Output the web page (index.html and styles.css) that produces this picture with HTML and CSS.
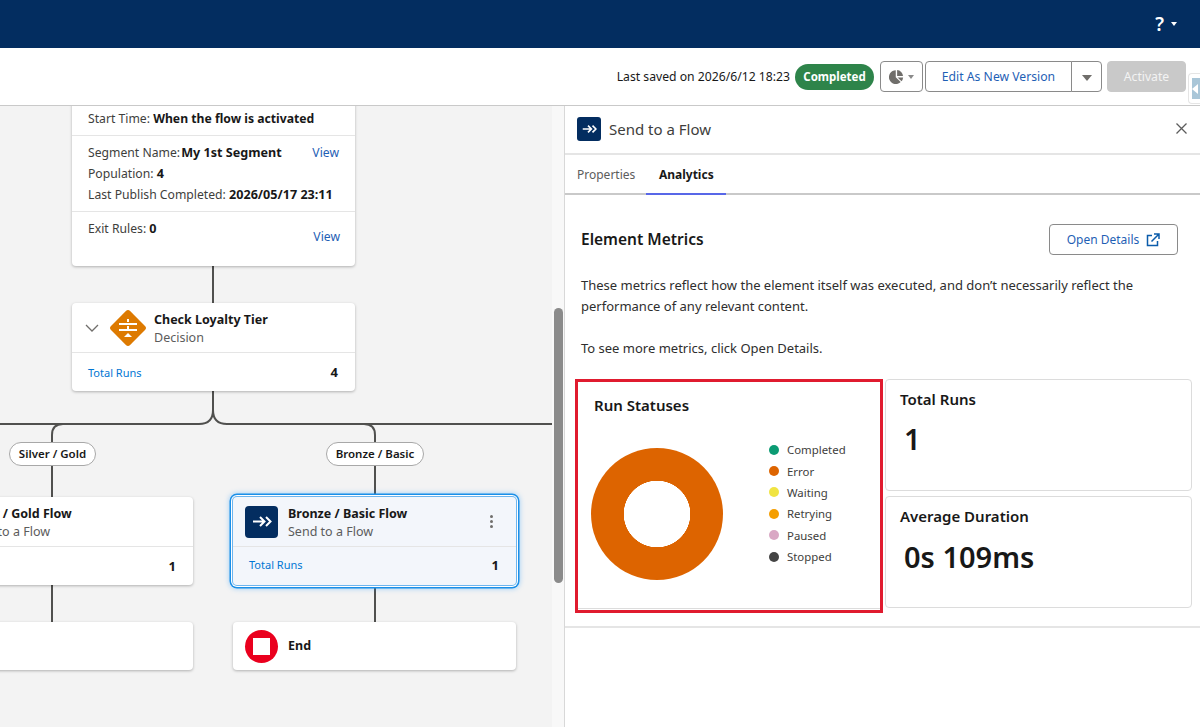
FILE: index.html
```html
<!DOCTYPE html>
<html lang="en">

<head>
  <meta charset="UTF-8" />
  <meta name="viewport" content="width=device-width, initial-scale=1.0" />
  <title>Flow Builder</title>
  <link rel="stylesheet" href="styles.css">
</head>

<body>
  <div class="topbar">
    <span class="help">?</span>
    <span class="caret caret-white"></span>
  </div>

  <div class="toolbar">
    <span class="saved">Last saved on 2026/6/12 18:23</span>
    <span class="status">Completed</span>
    <button class="btn btn-chart">
      <svg width="15" height="15" viewBox="0 0 14 14">
        <path d="M6.3 1.2v6.4l4.6 4.5A6.4 6.4 0 1 1 6.3 1.200z" fill="#706e6b" />
        <path d="M7.600 1a6 6 0 0 1 5.500 5.600H7.600z" fill="#706e6b" />
        <path d="M8 8h5.200a6 6 0 0 1-1.500 3.500z" fill="#706e6b" />
      </svg>
      <span class="caret caret-grey"></span>
    </button>
    <div class="btn-group">
      <button class="btn btn-edit">Edit As New Version</button>
      <button class="btn btn-more"><span class="caret caret-big"></span></button>
    </div>
    <button class="btn btn-activate">Activate</button>
    <div class="handle"><span class="handle-arrow"></span></div>
  </div>

  <div class="main">
    <div class="canvas">
      <div class="scroll-track"></div>
      <svg class="wires" width="552" height="621" viewBox="0 0 552 621">
        <g fill="none" stroke="#50504e" stroke-width="2">
          <path d="M213 160v37" />
          <path d="M213 285v19q0 14-14 14H0" />
          <path d="M213 304q0 14 14 14h325" />
          <path d="M52 336v-7q0-11 11-11" />
          <path d="M375 336v-7q0-11-11-11" />
          <path d="M52 360v31" />
          <path d="M375 360v31" />
          <path d="M52 479v37" />
          <path d="M375 479v37" />
        </g>
      </svg>

      <div class="node node-start">
        <div class="start-row start-time">Start Time: <b>When the flow is activated</b></div>
        <div class="start-row start-segment">
          <div class="seg-line"><span>Segment Name: <b>My 1st Segment</b></span><a href="#">View</a></div>
          <div>Population: <b>4</b></div>
          <div>Last Publish Completed: <b>2026/05/17 23:11</b></div>
        </div>
        <div class="start-row start-exit">
          <span>Exit Rules: <b>0</b></span>
          <a href="#">View</a>
        </div>
      </div>

      <div class="node node-decision">
        <div class="node-head">
          <svg class="chevron" width="14" height="8" viewBox="0 0 14 8">
            <path d="M1 1l6 6 6-6" fill="none" stroke="#706e6b" stroke-width="1.300" />
          </svg>
          <svg width="38" height="38" viewBox="0 0 38 38">
            <rect x="5.500" y="5.500" width="27" height="27" rx="3" fill="#dd7a01" transform="rotate(45 19 19)" />
            <path d="M18 10h2v3h-2zM18 17h2v4h-2zM10 14h18v2H10zM10 20h18v2H10zM19 24l4 4h-8z" fill="#fff" />
          </svg>
          <div class="node-title">
            <b>Check Loyalty Tier</b>
            <span>Decision</span>
          </div>
        </div>
        <div class="node-foot"><a href="#">Total Runs</a><b>4</b></div>
      </div>

      <span class="pill pill-silver">Silver / Gold</span>
      <span class="pill pill-bronze">Bronze / Basic</span>

      <div class="node node-silver">
        <div class="node-head">
          <div class="node-title">
            <b>Silver / Gold Flow</b>
            <span>Send to a Flow</span>
          </div>
        </div>
        <div class="node-foot"><a href="#">Total Runs</a><b>1</b></div>
      </div>

      <div class="node node-bronze">
        <div class="node-head">
          <div class="flow-icon">
            <svg width="20" height="13" viewBox="0 0 20 13">
              <path d="M1 6.500h11M8 2l4.500 4.500L8 11M14 2l4.500 4.500L14 11" fill="none" stroke="#fff" stroke-width="2" />
            </svg>
          </div>
          <div class="node-title">
            <b>Bronze / Basic Flow</b>
            <span>Send to a Flow</span>
          </div>
          <div class="dots"><i></i><i></i><i></i></div>
        </div>
        <div class="node-foot"><a href="#">Total Runs</a><b>1</b></div>
      </div>

      <div class="node node-blank"></div>

      <div class="node node-end">
        <div class="end-icon"><i></i></div>
        <b>End</b>
      </div>

      <div class="scroll-thumb"></div>
    </div>

    <div class="panel">
      <div class="panel-head">
        <div class="panel-icon">
          <svg width="15" height="10" viewBox="0 0 20 13">
            <path d="M1 6.500h11M8 2l4.500 4.500L8 11M14 2l4.500 4.500L14 11" fill="none" stroke="#fff" stroke-width="2.200" />
          </svg>
        </div>
        <span class="panel-title">Send to a Flow</span>
        <svg class="close" width="11" height="11" viewBox="0 0 11 11">
          <path d="M.5.5l10 10M10.500.5l-10 10" stroke="#5c5c5c" stroke-width="1.300" />
        </svg>
      </div>

      <div class="tabs">
        <span class="tab">Properties</span>
        <span class="tab tab-active">Analytics</span>
      </div>

      <div class="panel-body">
        <div class="metrics-head">
          <h2>Element Metrics</h2>
          <button class="btn btn-open">
            Open Details
            <svg width="14" height="14" viewBox="0 0 14 14">
              <path d="M6 2.500H1.500v10h10V8" fill="none" stroke="#0b5cab" stroke-width="1.500" />
              <path d="M5.500 8.500L12.500 1.500M8 1h5v5" fill="none" stroke="#0b5cab" stroke-width="1.500" />
            </svg>
          </button>
        </div>
        <p>These metrics reflect how the element itself was executed, and don’t necessarily reflect the performance of any relevant content.</p>
        <p class="more">To see more metrics, click Open Details.</p>
      </div>

      <div class="cards">
        <div class="card card-status">
          <h3>Run Statuses</h3>
          <div class="chart-row">
            <div class="donut"></div>
            <ul class="legend">
              <li><i class="dot-completed"></i>Completed</li>
              <li><i class="dot-error"></i>Error</li>
              <li><i class="dot-waiting"></i>Waiting</li>
              <li><i class="dot-retrying"></i>Retrying</li>
              <li><i class="dot-paused"></i>Paused</li>
              <li><i class="dot-stopped"></i>Stopped</li>
            </ul>
          </div>
        </div>
        <div class="card card-total">
          <h3>Total Runs</h3>
          <div class="big-num">1</div>
        </div>
        <div class="card card-avg">
          <h3>Average Duration</h3>
          <div class="big-num">0s 109ms</div>
        </div>
      </div>
    </div>
  </div>
</body>

</html>
```

FILE: styles.css
```css
* {
  padding: 0;
  margin: 0;
  box-sizing: border-box;
}

body {
  width: 1200px;
  height: 727px;
  overflow: hidden;
  font-family: "Noto Sans", "Open Sans", sans-serif;
  font-size: 12px;
  color: #181818;
  background: #fff;
}

a {
  color: #1f5fb5;
  text-decoration: none;
}

button {
  font-family: inherit;
}

/* top */
.topbar {
  height: 48px;
  background: #032d60;
  display: flex;
  justify-content: flex-end;
  align-items: center;
  gap: 7px;
  padding-right: 23px;
}

.help {
  color: #fff;
  font-size: 19px;
  font-weight: 600;
}

.caret {
  display: inline-block;
  width: 0;
  height: 0;
  border-left: 3px solid transparent;
  border-right: 3px solid transparent;
  border-top: 4px solid #fff;
}

.caret-grey {
  border-top-color: #8a8a8a;
}

.caret-big {
  border-left-width: 5px;
  border-right-width: 5px;
  border-top: 6px solid #706e6b;
}

.toolbar {
  position: relative;
  height: 58px;
  display: flex;
  align-items: center;
  justify-content: flex-end;
  padding: 0 14px 0 0;
  border-bottom: 1px solid #c9c9c9;
}

.saved {
  margin-right: 5px;
  font-size: 12.2px;
}

.status {
  width: 79px;
  height: 26px;
  line-height: 25px;
  margin-right: 6px;
  text-align: center;
  border-radius: 13px;
  background: #2e844a;
  color: #fff;
  font-size: 11.5px;
  font-weight: 700;
}

.btn {
  background: #fff;
  border: 1px solid #8a8a8a;
  border-radius: 4px;
  color: #1f5fb5;
  font-size: 12.2px;
}

.btn-chart {
  width: 43px;
  height: 31px;
  margin-right: 2px;
  display: flex;
  align-items: center;
  justify-content: center;
  gap: 4px;
}

.btn-group {
  display: flex;
  margin-right: 5px;
}

.btn-edit {
  width: 147px;
  height: 31px;
  border-radius: 4px 0 0 4px;
}

.btn-more {
  width: 31px;
  height: 31px;
  border-radius: 0 4px 4px 0;
  margin-left: -1px;
}

.btn-activate {
  width: 79px;
  height: 31px;
  background: #c9c9c9;
  border-color: #c9c9c9;
  color: #f3f3f3;
}

.handle {
  position: absolute;
  right: 0;
  top: 25px;
  width: 12px;
  height: 31px;
  background: #fff;
  border: 1px solid #e5e5e5;
  border-right: 0;
  border-radius: 4px 0 0 4px;
  padding: 4px 0 4px 3px;
}

.handle-arrow {
  display: block;
  height: 100%;
  background: #a9c6d8;
  padding-top: 6px;
}

.handle-arrow::before {
  content: "";
  display: block;
  width: 0;
  height: 0;
  border-top: 5px solid transparent;
  border-bottom: 5px solid transparent;
  border-right: 6px solid #fff;
}

.main {
  display: flex;
  height: 621px;
}

/* flow canvas */
.canvas {
  position: relative;
  width: 564px;
  background: #f3f3f3;
  overflow: hidden;
}

.scroll-track {
  position: absolute;
  left: 552px;
  top: 0;
  width: 12px;
  height: 100%;
  background: #f8f8f8;
}

.wires {
  position: absolute;
  left: 0;
  top: 0;
}

.node {
  position: absolute;
  width: 283px;
  background: #fff;
  border-radius: 4px;
  box-shadow: 0 1px 3px rgba(0, 0, 0, .28);
}

.node-start {
  left: 72px;
  top: -20px;
  height: 180px;
}

.start-row {
  padding: 0 16px;
  border-bottom: 1px solid #e5e5e5;
  color: #3e3e3c;
  font-size: 12.2px;
}

.start-row b {
  color: #181818;
  font-size: 12.6px;
}

.start-time {
  height: 50px;
  padding-top: 24px;
}

.start-time b {
  font-size: 12.2px;
}

.start-segment {
  height: 76px;
  padding-top: 6px;
  line-height: 21px;
}

.seg-line {
  display: flex;
  justify-content: space-between;
}

.seg-line b {
  margin-left: -2px;
}

.start-exit {
  height: 54px;
  border-bottom: 0;
  padding-top: 8px;
  display: flex;
  justify-content: space-between;
  align-items: flex-start;
  padding-right: 15px;
}

.start-exit a {
  margin-top: 8px;
}

.node-decision {
  left: 72px;
  top: 197px;
  height: 88px;
}

.node-silver {
  left: -90px;
  top: 391px;
  height: 88px;
}

.node-bronze {
  left: 233px;
  top: 391px;
  height: 88px;
  background: #f3f6fb;
  box-shadow: 0 0 0 1px #6db5ee, 0 0 0 2px #fff, 0 0 0 3.5px #1b8fe8, 0 0 5px 4px rgba(27, 150, 255, .35);
}

.node-blank {
  left: -90px;
  top: 516px;
  height: 48px;
}

.node-end {
  left: 233px;
  top: 516px;
  height: 48px;
  display: flex;
  align-items: center;
  gap: 10px;
  padding-left: 12px;
  font-size: 12.5px;
}

.node-end b {
  margin-top: -2px;
}

.node-head {
  height: 50px;
  display: flex;
  align-items: center;
  padding-left: 12px;
  border-bottom: 1px solid #e5e5e5;
}

.node-decision .node-head {
  padding-left: 13px;
}

.chevron {
  margin: 0 10px 0 0;
}

.node-title {
  display: flex;
  flex-direction: column;
  margin: 2px 0 0 7px;
  line-height: 18px;
  font-size: 12.5px;
}

.node-bronze .node-title {
  margin-left: 10px;
}

.node-title span {
  color: #5c5c5c;
}

.node-silver .node-head {
  padding-left: 55px;
}

.node-silver .node-title {
  margin-left: 0;
}

.node-foot {
  height: 38px;
  display: flex;
  justify-content: space-between;
  align-items: center;
  padding: 0 17px 0 16px;
  font-size: 11px;
}

.node-foot a {
  color: #0176d3;
}

.node-foot b {
  font-size: 13px;
}

.node-bronze .node-foot {
  padding-bottom: 3px;
}

.node-silver .node-foot a {
  visibility: hidden;
}

.flow-icon {
  width: 33px;
  height: 32px;
  border-radius: 4px;
  background: #032d60;
  display: flex;
  align-items: center;
  justify-content: center;
}

.dots {
  margin-left: auto;
  margin-right: 23px;
  display: flex;
  flex-direction: column;
  gap: 2px;
}

.dots i {
  width: 3px;
  height: 3px;
  border-radius: 50%;
  background: #706e6b;
}

.end-icon {
  width: 33px;
  height: 33px;
  border-radius: 50%;
  background: #ea001e;
  display: flex;
  align-items: center;
  justify-content: center;
}

.end-icon i {
  width: 17px;
  height: 17px;
  background: #fff;
}

.pill {
  position: absolute;
  top: 336px;
  height: 24px;
  line-height: 22px;
  text-align: center;
  background: #fff;
  border: 1px solid #a8a8a8;
  border-radius: 12px;
  font-size: 11.5px;
  font-weight: 600;
}

.pill-silver {
  left: 9px;
  width: 87px;
}

.pill-bronze {
  left: 326px;
  width: 98px;
}

.scroll-thumb {
  position: absolute;
  left: 554px;
  top: 202px;
  width: 9px;
  height: 275px;
  border-radius: 5px;
  background: #8b8b8b;
}

/* right panel */
.panel {
  width: 636px;
  border-left: 1px solid #d8d8d8;
  background: #fff;
}

.panel-head {
  height: 49px;
  display: flex;
  align-items: center;
  padding: 0 13px 2px 12px;
  border-bottom: 2px solid #e5e5e5;
}

.panel-icon {
  width: 24px;
  height: 24px;
  border-radius: 3px;
  background: #032d60;
  display: flex;
  align-items: center;
  justify-content: center;
}

.panel-title {
  margin-left: 8px;
  font-size: 15px;
  color: #3e3e3c;
}

.close {
  margin-left: auto;
}

.tabs {
  height: 40px;
  display: flex;
  border-bottom: 2px solid #c9c9c9;
  font-size: 12px;
  padding-left: 12px;
}

.tab {
  line-height: 40px;
  color: #5c5c5c;
  margin-right: 11px;
}

.tab-active {
  width: 80px;
  height: 40px;
  text-align: center;
  font-weight: 700;
  color: #181818;
  border-bottom: 2px solid #5867e8;
}

.panel-body {
  padding: 29px 22px 0 16px;
  font-size: 13px;
  line-height: 21px;
  color: #2e2e2e;
}

.metrics-head {
  display: flex;
  justify-content: space-between;
  align-items: center;
  margin-bottom: 20px;
}

.metrics-head h2 {
  font-size: 15.5px;
  font-weight: 600;
  color: #181818;
}

.btn-open {
  width: 129px;
  height: 31px;
  display: flex;
  align-items: center;
  justify-content: center;
  gap: 7px;
  font-size: 12px;
}

.more {
  margin-top: 21px;
}

.cards {
  display: grid;
  grid-template-columns: 308px 307px;
  grid-template-rows: 112px 112px;
  column-gap: 2px;
  row-gap: 5px;
  margin-top: 20px;
  padding-left: 10px;
  height: 249px;
  border-bottom: 2px solid #e5e5e5;
}

.card {
  border: 1px solid #dcdcdc;
  border-radius: 4px;
  padding: 9px 14px;
}

.card h3 {
  font-size: 15px;
  font-weight: 600;
}

.card-status {
  grid-row: 1 / 3;
  height: 234px;
  border: 3px solid #e01b2f;
  border-radius: 0;
  padding: 13px 16px;
  box-shadow: inset 0 -1px 0 #fff, inset 0 -2px 0 #dcdcdc;
}

.chart-row {
  position: relative;
  display: flex;
  margin-top: 22px;
}

.donut {
  position: absolute;
  left: -3px;
  top: 11px;
  width: 132px;
  height: 132px;
  border-radius: 50%;
  background: radial-gradient(circle, #fff 0 33px, #dd6400 33.5px);
}

.legend {
  list-style: none;
  margin-left: 175px;
  margin-top: 2px;
  font-size: 11.4px;
  color: #3e3e3c;
}

.legend li {
  display: flex;
  align-items: center;
  height: 21.4px;
}

.legend i {
  width: 10px;
  height: 10px;
  border-radius: 50%;
  margin-right: 8px;
}

.dot-completed { background: #0b9b73; }
.dot-error { background: #dd6400; }
.dot-waiting { background: #f0e442; }
.dot-retrying { background: #f59e00; }
.dot-paused { background: #d9a8c4; }
.dot-stopped { background: #444; }

.big-num {
  font-size: 29px;
  font-weight: 600;
  line-height: 40px;
  margin: 10px 0 0 4px;
}

.card-avg .big-num {
  margin-top: 11px;
}
```
